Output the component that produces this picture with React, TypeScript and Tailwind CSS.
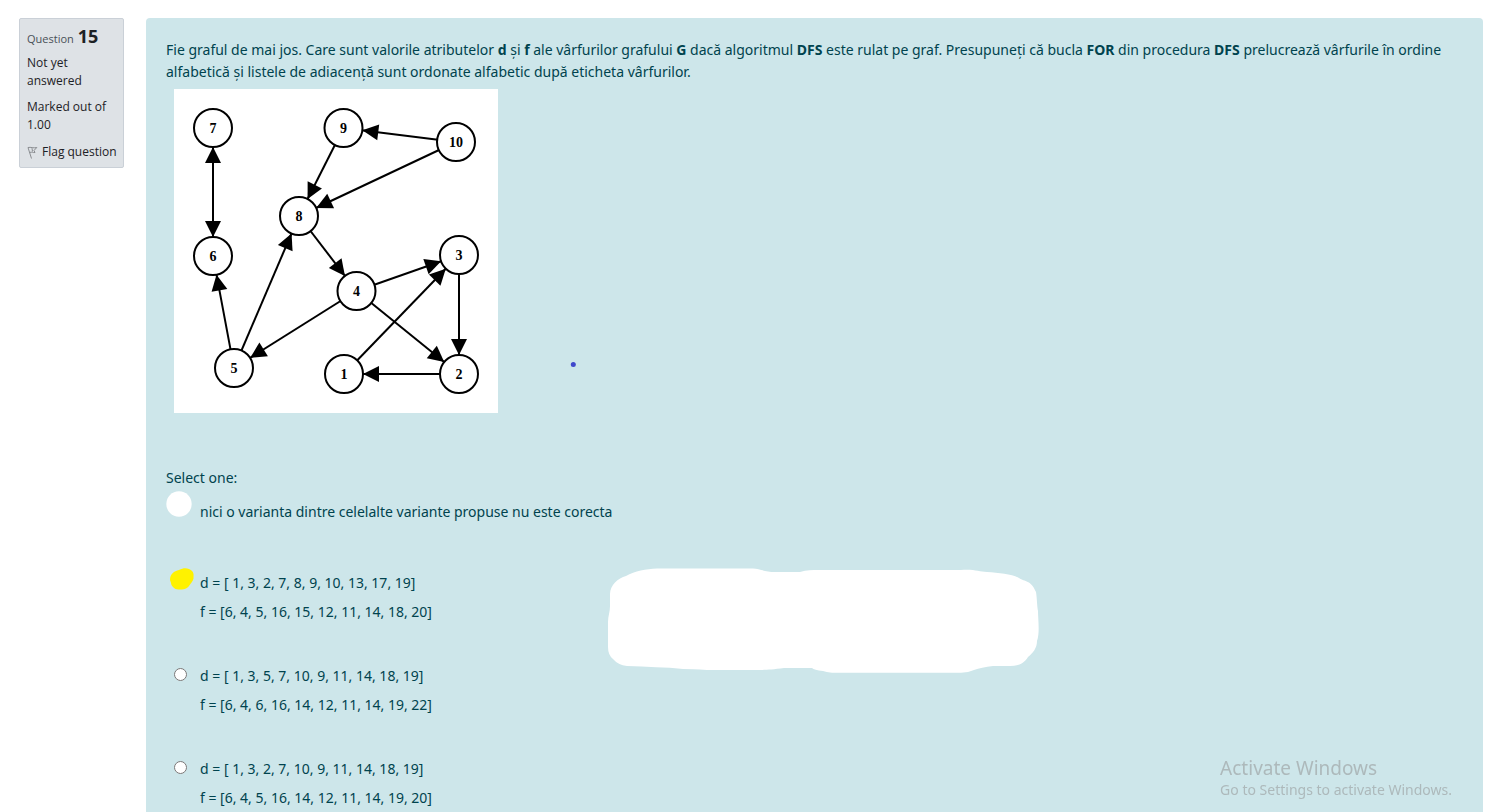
import React from "react";

type Point = { x: number; y: number };

const nodes: Record<string, Point> = {
  "1": { x: 170, y: 285 },
  "2": { x: 285, y: 285 },
  "3": { x: 285, y: 166 },
  "4": { x: 182.5, y: 202 },
  "5": { x: 60, y: 279 },
  "6": { x: 39, y: 167 },
  "7": { x: 39, y: 39 },
  "8": { x: 125, y: 127 },
  "9": { x: 169.5, y: 39 },
  "10": { x: 282, y: 53 },
};

const edges: [string, string, boolean?][] = [
  ["7", "6", true],
  ["10", "9"],
  ["10", "8"],
  ["9", "8"],
  ["8", "4"],
  ["4", "3"],
  ["4", "2"],
  ["4", "5"],
  ["1", "3"],
  ["3", "2"],
  ["2", "1"],
  ["5", "8"],
  ["5", "6"],
];

const RADIUS = 19;

function arrowHead(from: Point, to: Point): string {
  const length = Math.hypot(to.x - from.x, to.y - from.y);
  const ux = (to.x - from.x) / length;
  const uy = (to.y - from.y) / length;
  const tip = { x: to.x - ux * RADIUS, y: to.y - uy * RADIUS };
  const base = { x: tip.x - ux * 16, y: tip.y - uy * 16 };
  return `${tip.x},${tip.y} ${base.x - uy * 8},${base.y + ux * 8} ${base.x + uy * 8},${base.y - ux * 8}`;
}

function Graph() {
  return (
    <svg
      className="mx-2 mt-[6px] block bg-white"
      width="324"
      height="324"
      viewBox="0 0 324 324"
      role="img"
      aria-label="Graf"
    >
      {edges.map(([a, b, both]) => (
        <g key={`${a}-${b}`}>
          <line x1={nodes[a].x} y1={nodes[a].y} x2={nodes[b].x} y2={nodes[b].y} stroke="#000" strokeWidth="2" />
          <polygon points={arrowHead(nodes[a], nodes[b])} />
          {both && <polygon points={arrowHead(nodes[b], nodes[a])} />}
        </g>
      ))}
      {Object.entries(nodes).map(([name, p]) => (
        <g key={name}>
          <circle cx={p.x} cy={p.y} r={RADIUS} fill="#fff" stroke="#000" strokeWidth="2" />
          <text
            x={p.x}
            y={p.y + 5}
            textAnchor="middle"
            className="font-['Liberation_Serif',serif] text-[14px] font-bold"
          >
            {name}
          </text>
        </g>
      ))}
    </svg>
  );
}

type Option = { id: string; lines: string[]; mark?: React.ReactNode };

const options: Option[] = [
  {
    id: "a",
    lines: ["nici o varianta dintre celelalte variante propuse nu este corecta"],
    mark: (
      <svg className="absolute -top-[10px] left-0" width="26" height="26" viewBox="0 0 26 26" aria-hidden="true">
        <circle cx="13" cy="13" r="12.7" fill="#fff" />
      </svg>
    ),
  },
  {
    id: "b",
    lines: ["d = [ 1, 3, 2, 7, 8, 9, 10, 13, 17, 19]", "f = [6, 4, 5, 16, 15, 12, 11, 14, 18, 20]"],
    mark: (
      <svg className="absolute -top-[4px] left-1" width="24" height="22" viewBox="0 0 24 22" aria-hidden="true">
        <path
          d="M0 12C0 6 4 3 9 2C13 0 16 0 19 1C23 3 24 5 23.500 9C24 12 21 15 19 18C17 21 13 21.500 9 21.500C5 22 1 18 1 15Z"
          fill="#fff200"
        />
      </svg>
    ),
  },
  {
    id: "c",
    lines: ["d = [ 1, 3, 5, 7, 10, 9, 11, 14, 18, 19]", "f = [6, 4, 6, 16, 14, 12, 11, 14, 19, 22]"],
  },
  {
    id: "d",
    lines: ["d = [ 1, 3, 2, 7, 10, 9, 11, 14, 18, 19]", "f = [6, 4, 5, 16, 14, 12, 11, 14, 19, 20]"],
  },
];

function OptionRow({ option }: { option: Option }) {
  return (
    <div className="relative flex items-start gap-[13px] pl-2">
      <input
        type="radio"
        name="answer"
        id={`answer-${option.id}`}
        className={
          option.mark
            ? "mt-[3px] size-[13px] shrink-0 appearance-none rounded-full"
            : "mt-[3px] size-[13px] shrink-0"
        }
      />
      {option.mark}
      <label htmlFor={`answer-${option.id}`} className="flex flex-col gap-[7px]">
        {option.lines.map((line) => (
          <span key={line}>{line}</span>
        ))}
      </label>
    </div>
  );
}

function QuestionInfo() {
  return (
    <aside className="w-[105px] shrink-0 self-start rounded-xs border border-[#cad0d7] bg-[#dee2e6] px-[7px] pt-[6px] pb-[6px] font-['Open_Sans',sans-serif] text-[12px] leading-[18px] text-[#1d2125]">
      <h3 className="flex items-baseline gap-1 text-[11px] leading-[22px] text-[#495057]">
        Question <span className="text-[18px] font-bold text-[#1d2125]">15</span>
      </h3>
      <div className="mt-1">Not yet answered</div>
      <div className="mt-2">Marked out of 1.00</div>
      <a href="#flag" className="mt-[9px] flex items-center gap-1 whitespace-nowrap">
        <svg width="11" height="13" viewBox="0 0 11 13" fill="none" stroke="#8a8d91" className="shrink-0" aria-hidden="true">
          <path d="M1 1.500L4.500 12.500M1 1.500C4 .8 6 2.500 9.800 1.500L7 4.500L8 6.500C6 7 5 5.500 2.700 6.500M5 2.200L5.500 5.500" />
        </svg>
        Flag question
      </a>
    </aside>
  );
}

export default function App() {
  return (
    <div className="flex min-h-screen gap-[22px] bg-white pt-[18px] pr-[13px] pl-[19px] font-['Noto_Sans','Open_Sans',sans-serif]">
      <QuestionInfo />
      <main className="relative min-w-0 flex-1 rounded-t bg-[#cde6ea] px-5 pt-[21px] text-[14px] leading-[22px] text-[#00434e]">
        <p>
          Fie graful de mai jos. Care sunt valorile atributelor <b>d</b> și <b>f</b> ale vârfurilor grafului <b>G</b>{" "}
          dacă algoritmul <b>DFS</b> este rulat pe graf. Presupuneți că bucla <b>FOR</b> din procedura <b>DFS</b>{" "}
          prelucrează vârfurile în ordine alfabetică și listele de adiacență sunt ordonate alfabetic după eticheta
          vârfurilor.
        </p>
        <Graph />
        <fieldset className="mt-[54px]">
          <legend>Select one:</legend>
          <div className="mt-3 flex flex-col gap-[42px]">
            {options.map((option) => (
              <div key={option.id} className="first:pb-[7px]">
                <OptionRow option={option} />
              </div>
            ))}
          </div>
        </fieldset>
        <svg
          className="pointer-events-none absolute top-[550px] left-[462px]"
          width="432"
          height="105"
          viewBox="0 0 432 105"
          aria-hidden="true"
        >
          <path
            d="M2 26C2 17 10 10 18 8C27 3 38 1 49 .500H145C152 1 158 4 167 4H192C199 2 204 2 211 2H353C367 1 371 4 379 4C391 5 405 6 411 10C417 14 423 12 428 24C429 30 429 38 430 43C430 51 432 65 429 73C429 80 425 85 420 89C416 96 409 98 402 98H385C377 99 371 100 366 102Q360 104.800 353 104.800H224Q218 104 215 103Q206 102 204 100H176C161 102 156 102 144 102H99Q84 101 75 101C58 99 39 99 19 98Q10 97 5 91Q0 87 0 79V54C0 48 2 44 2 38Z"
            fill="#fff"
          />
        </svg>
        <svg
          className="pointer-events-none absolute top-[344px] left-[424px]"
          width="6"
          height="6"
          viewBox="0 0 6 6"
          aria-hidden="true"
        >
          <circle cx="3.3" cy="2.500" r="2.500" fill="#3f48cc" />
        </svg>
      </main>
      <div className="pointer-events-none fixed right-[44px] bottom-3 text-[#adb9bb]">
        <div className="text-[19px] leading-6">Activate Windows</div>
        <div className="text-[14px] leading-5">Go to Settings to activate Windows.</div>
      </div>
    </div>
  );
}
